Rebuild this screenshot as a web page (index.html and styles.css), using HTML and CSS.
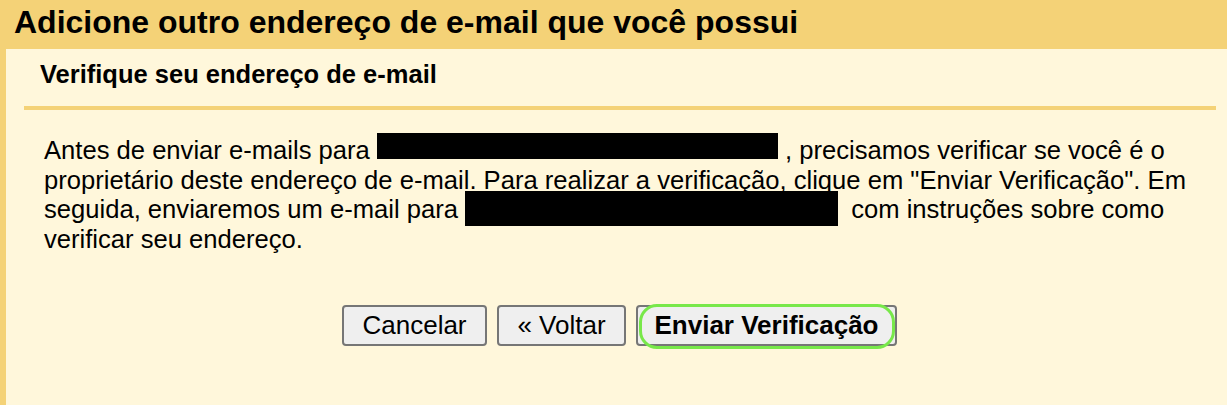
FILE: index.html
```html
<!DOCTYPE html>
<html lang="pt-BR">
<head>
<meta charset="utf-8">
<title>Adicione outro endereço de e-mail</title>
<link rel="stylesheet" href="styles.css">
</head>
<body>
<div class="page">
  <h1 class="title">Adicione outro endereço de e-mail que você possui</h1>
  <div class="panel">
    <h2 class="subtitle">Verifique seu endereço de e-mail</h2>
    <p class="msg">Antes de enviar e-mails para <span class="redact r1"></span> , precisamos verificar se você é o proprietário deste endereço de e-mail. Para realizar a verificação, clique em "Enviar Verificação". Em seguida, enviaremos um e-mail para <span class="redact r2"></span> com instruções sobre como verificar seu endereço.</p>
    <div class="actions">
      <button class="btn btn-cancel" type="button">Cancelar</button>
      <button class="btn btn-back" type="button">« Voltar</button>
      <button class="btn btn-primary" type="button">Enviar Verificação</button>
    </div>
  </div>
</div>
</body>
</html>
```

FILE: styles.css
```css
html, body {
  margin: 0;
  padding: 0;
  height: 100%;
}
body {
  background: #fff7db;
  font-family: "Liberation Sans", Arial, sans-serif;
  color: #000;
}
.page {
  display: flex;
  flex-direction: column;
  min-height: 100%;
}
.title {
  margin: 0;
  background: #f4d277;
  height: 49px;
  line-height: 44px;
  padding-left: 14px;
  font-size: 32px;
  font-weight: bold;
  white-space: nowrap;
  overflow: hidden;
}
.panel {
  flex: 1;
  border-left: 6px solid #f4d277;
  background: #fff7db;
}
.subtitle {
  margin: 0 11px 0 18px;
  padding: 11px 0 0 16px;
  box-sizing: border-box;
  height: 61px;
  font-size: 25.5px;
  font-weight: bold;
  line-height: 28px;
  border-bottom: 4px solid #f4d277;
}
.msg {
  margin: 0;
  padding: 26px 27px 0 38px;
  font-size: 25.6px;
  line-height: 29.5px;
}
.redact {
  display: inline-block;
  background: #000;
  vertical-align: baseline;
}
.r1 {
  width: 401px;
  height: 26px;
  margin-top: -8px;
}
.r2 {
  width: 373px;
  height: 35px;
  margin-top: -6px;
  margin-bottom: -8px;
  margin-right: 6px;
}
.actions {
  display: flex;
  justify-content: center;
  gap: 10px;
  padding-top: 51px;
  margin-left: 6px;
}
.btn {
  position: relative;
  box-sizing: border-box;
  height: 41px;
  padding: 0;
  font-family: "Liberation Sans", Arial, sans-serif;
  font-size: 26px;
  color: #000;
  background: #efefef;
  border: 2px solid #767676;
  border-radius: 4px;
}
.btn-cancel {
  width: 145px;
}
.btn-back {
  width: 129px;
}
.btn-primary {
  width: 261px;
  font-weight: bold;
}
.btn-primary::after {
  content: "";
  position: absolute;
  left: 1px;
  right: 0;
  top: -3px;
  bottom: -5px;
  border: 3px solid #78e84a;
  border-radius: 18px;
}
```
